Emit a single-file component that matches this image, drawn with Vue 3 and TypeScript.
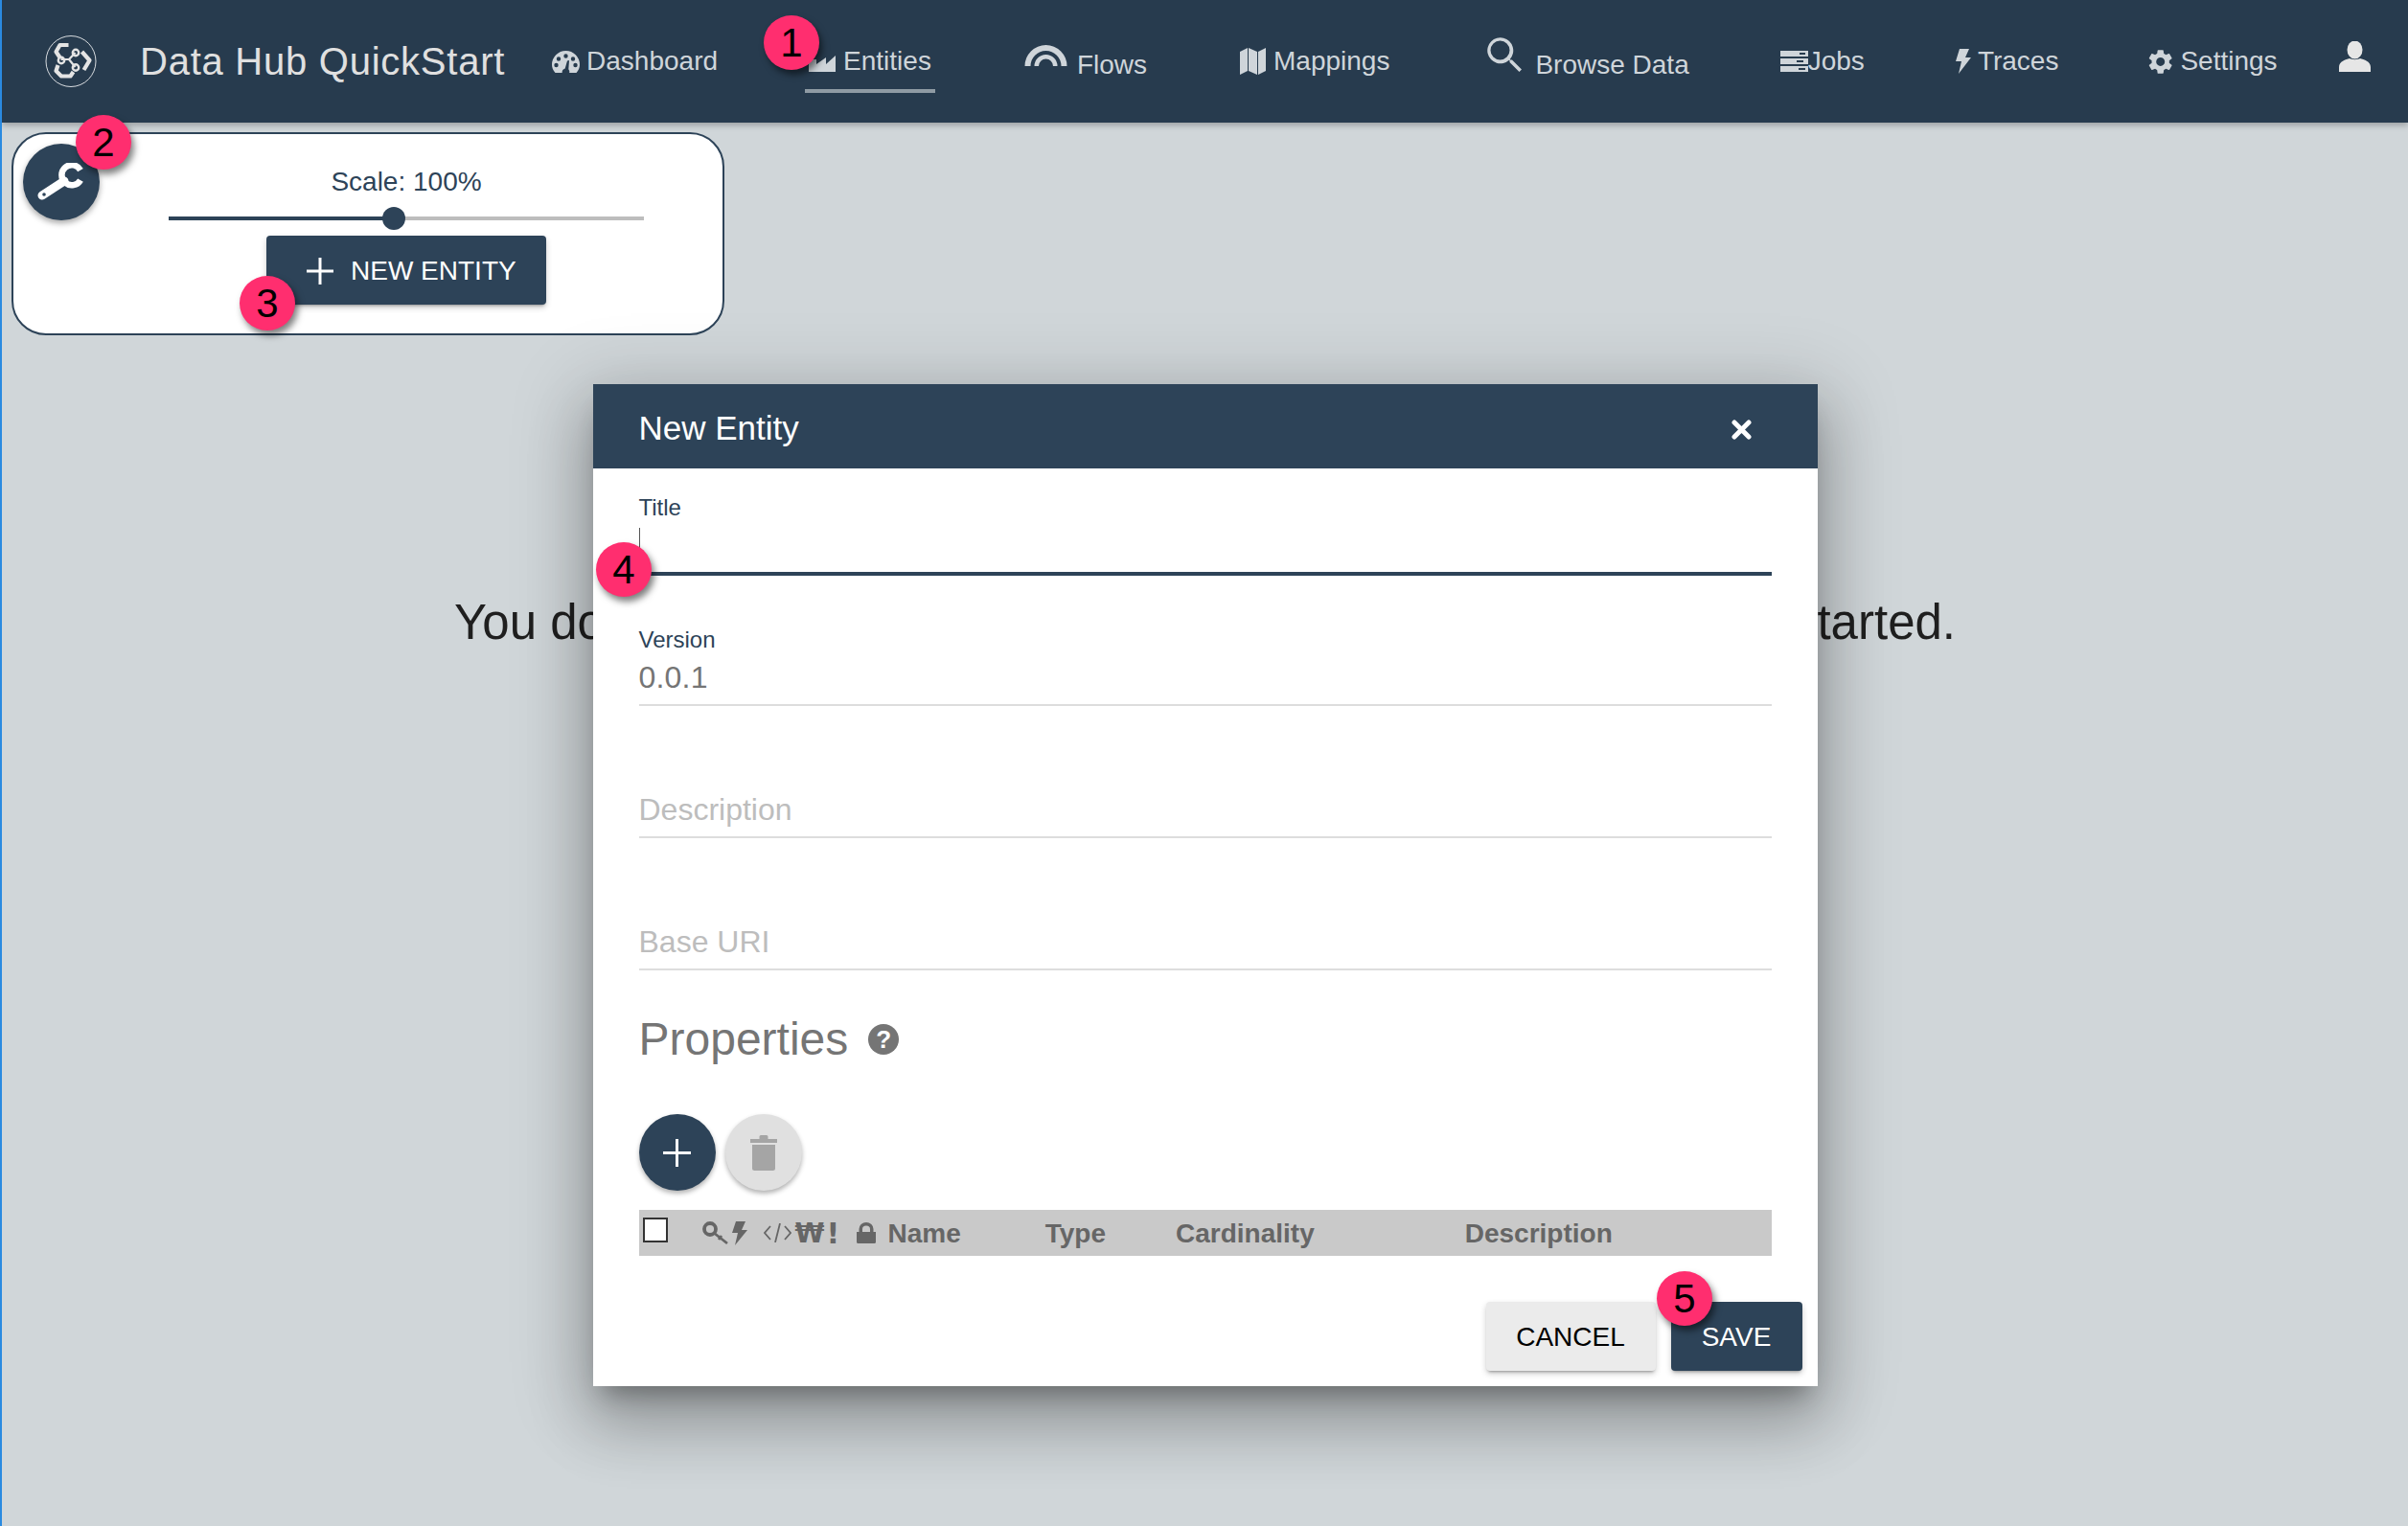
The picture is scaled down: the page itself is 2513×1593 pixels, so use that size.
<script setup lang="ts">
interface NavIcon {
  w: number;
  h: number;
  d: string;
}

interface NavItem {
  key: string;
  label: string;
  icon: NavIcon;
}

const hole = (x: number, y: number, r: number) =>
  `M${x - r} ${y}a${r} ${r} 0 1 0 ${r * 2} 0a${r} ${r} 0 1 0 ${-r * 2} 0z`;

const NAV_ITEMS: NavItem[] = [
  {
    key: 'dashboard',
    label: 'Dashboard',
    icon: {
      w: 29,
      h: 23,
      d:
        'M3.5 23C1.2 20.6 0 17.6 0 14.5a14.5 14.5 0 0 1 29 0c0 3.100-1.200 6.100-3.500 8.500h-7.300a4 4 0 0 0-.9-3.800L18 10l-2 .4-2.300 8.200a4.500 4.500 0 0 0-3.100 4.400z' +
        hole(14.5, 5.5, 2.2) + hole(7, 8.500, 2.2) + hole(22, 8.500, 2.2) + hole(4.500, 15, 2.2) + hole(24.500, 15, 2.2),
    },
  },
  {
    key: 'entities',
    label: 'Entities',
    icon: { w: 28, h: 21, d: 'M0 21V8h8v5l10-7v7l10-9v17z' },
  },
  {
    key: 'flows',
    label: 'Flows',
    icon: {
      w: 45,
      h: 22,
      d: 'M0.5 22A22 22 0 0 1 44.500 22H38.500A16 16 0 0 0 6.500 22zM10.500 22A12 12 0 0 1 34.500 22H30A7.500 7.500 0 0 0 15 22z',
    },
  },
  {
    key: 'mappings',
    label: 'Mappings',
    icon: { w: 27, h: 28, d: 'M0 4l8-4v24l-8 4zM9 0l9 4v24l-9-4zM19 4l8-4v24l-8 4z' },
  },
  {
    key: 'browse',
    label: 'Browse Data',
    icon: {
      w: 36,
      h: 36,
      d: 'M26 23.500h-1.700l-.6-.6A13.500 13.500 0 1 0 22.900 23.700l.6.6V26l10 10 2.500-2.500zM13.500 23.500a10 10 0 1 1 0-20 10 10 0 0 1 0 20z',
    },
  },
  {
    key: 'jobs',
    label: 'Jobs',
    icon: {
      w: 29,
      h: 22,
      d: 'M0 0h29v6H0zM20 2v2h6V2zM0 8h29v6H0zM17 10v2h7v-2zM0 16h29v6H0zM19 18v2h7v-2z',
    },
  },
  {
    key: 'traces',
    label: 'Traces',
    icon: { w: 16, h: 26, d: 'M4 0h10l-4 9h6L3 26l3-13H0z' },
  },
  {
    key: 'settings',
    label: 'Settings',
    icon: {
      w: 25,
      h: 25,
      d: 'M21.800 13.700c.05-.4.08-.8.08-1.200s-.03-.8-.09-1.200l2.600-2c.23-.18.3-.5.150-.78l-2.450-4.240c-.15-.28-.47-.37-.75-.28l-3.050 1.220c-.64-.48-1.310-.89-2.070-1.200l-.46-3.240C15.710.5 15.450.28 15.150.28h-4.900c-.31 0-.55.22-.6.52l-.46 3.240c-.75.31-1.440.73-2.070 1.200L4.070 4.020c-.28-.1-.6 0-.75.28L.870 8.540c-.15.27-.1.6.150.78l2.590 2c-.06.4-.11.8-.11 1.200s.03.8.09 1.200l-2.590 2c-.23.18-.3.52-.15.78l2.450 4.240c.15.28.47.37.75.28l3.050-1.220c.64.48 1.310.89 2.070 1.200l.46 3.240c.06.31.31.52.61.52h4.900c.31 0 .56-.22.6-.52l.46-3.240c.75-.31 1.440-.71 2.070-1.200l3.050 1.220c.28.1.6 0 .75-.28l2.450-4.240c.15-.28.09-.6-.15-.78zM12.700 16.900a4.500 4.500 0 1 1 0-9 4.500 4.500 0 0 1 0 9z',
    },
  },
];
</script>

<template>
  <div class="page">
    <header class="nav">
      <svg class="logo" viewBox="7 8 53 54" aria-label="Logo">
        <ellipse cx="33.500" cy="35" rx="26" ry="26.500" fill="none" stroke="#d8dce0" stroke-width="1" />
        <g fill="none" stroke="#e4e4e4" stroke-width="4.200" stroke-linejoin="round">
          <path d="M31 18H22L18 25L22 31" />
          <path d="M45 25L53 34L47 44" />
          <path d="M20 39L18 45L23.500 50.500H33L36 46" />
          <path stroke-width="2.200" d="M38 26L31.500 33L38 41M31.500 33H23" />
          <circle cx="38.500" cy="26" r="3.200" stroke-width="2.400" />
          <circle cx="23.500" cy="34" r="3.200" stroke-width="2.400" />
          <circle cx="38.500" cy="41.500" r="3.200" stroke-width="2.400" />
        </g>
      </svg>
      <div class="brand">Data Hub QuickStart</div>
      <a
        v-for="item in NAV_ITEMS"
        :key="item.key"
        class="nav-item"
        :class="`nav-item--${item.key}`"
      >
        <svg
          class="nav-icon"
          :width="item.icon.w"
          :height="item.icon.h"
          :viewBox="`0 0 ${item.icon.w} ${item.icon.h}`"
        >
          <path :d="item.icon.d" fill="currentColor" fill-rule="evenodd" />
        </svg>
        <span>{{ item.label }}</span>
      </a>
      <svg class="user" width="33" height="32" viewBox="0 0 33 32">
        <ellipse cx="16.500" cy="9" rx="8" ry="9.500" fill="#e6e6e6" />
        <path d="M0 32v-5c0-6 7-8 11-9 3 1.500 8 1.500 11 0 4 1 11 3 11 9v5z" fill="#e6e6e6" />
      </svg>
    </header>

    <main class="main">
      <section class="tools">
        <button class="tools-fab" aria-label="Tools">
          <svg width="50" height="40" viewBox="0 0 50 40">
            <path d="M5 34L28 19" fill="none" stroke="#fff" stroke-width="9" stroke-linecap="round" />
            <path d="M45 7.500A10.500 10.500 0 1 0 45 18" fill="none" stroke="#fff" stroke-width="6.500" />
            <circle cx="7" cy="33" r="1.800" fill="#2d4358" />
          </svg>
        </button>
        <div class="tools-body">
          <div class="scale-label">Scale: 100%</div>
          <div class="slider">
            <div class="slider-fill"></div>
            <div class="slider-thumb"></div>
          </div>
          <button class="new-entity">
            <svg width="28" height="28" viewBox="0 0 28 28">
              <path d="M14 0v28M0 14h28" stroke="#fff" stroke-width="3" />
            </svg>
            <span>NEW ENTITY</span>
          </button>
        </div>
      </section>
      <p class="empty-msg">You don't have any entities yet. Click New Entity button to get started.</p>
    </main>

    <div class="overlay">
      <div class="dialog">
        <div class="dialog-head">
          <span>New Entity</span>
          <svg class="dialog-close" width="21" height="21" viewBox="0 0 21 21">
            <path d="M3 3l15 15M18 3L3 18" stroke="#fff" stroke-width="5" stroke-linecap="round" />
          </svg>
        </div>
        <div class="dialog-body">
          <div class="field field--active">
            <label>Title</label>
            <div class="field-value"><i class="caret"></i></div>
          </div>
          <div class="field">
            <label>Version</label>
            <div class="field-value">0.0.1</div>
          </div>
          <div class="field">
            <label></label>
            <div class="field-value field-value--empty">Description</div>
          </div>
          <div class="field">
            <label></label>
            <div class="field-value field-value--empty">Base URI</div>
          </div>

          <h2 class="props-title">
            Properties
            <span class="help">?</span>
          </h2>

          <div class="props-actions">
            <button class="round round--add" aria-label="Add">
              <svg width="29" height="29" viewBox="0 0 29 29">
                <path d="M14.500 0v29M0 14.500h29" stroke="#fff" stroke-width="3" />
              </svg>
            </button>
            <button class="round round--del" aria-label="Delete">
              <svg width="28" height="37" viewBox="0 0 28 37">
                <path d="M0 4h9.500V1.500Q9.500 0 11 0h6q1.500 0 1.500 1.500V4H28v4H0zM2 10h24v24.500q0 2.500-2.500 2.500h-19Q2 37 2 34.500z" fill="#a5a5a5" />
              </svg>
            </button>
          </div>

          <div class="props-head">
            <span class="check"></span>
            <svg class="ic-key" width="29" height="25" viewBox="0 0 29 25">
              <circle cx="9" cy="8" r="6" fill="none" stroke="#666" stroke-width="3.800" />
              <path d="M13 12l14 11M21 15l-3 4" fill="none" stroke="#666" stroke-width="2.800" />
            </svg>
            <svg class="ic-bolt" width="16" height="25" viewBox="0 0 16 25">
              <path d="M4 0h10l-4 9h6L3 25l3-13H0z" fill="#666" />
            </svg>
            <svg class="ic-code" width="29" height="20" viewBox="0 0 29 20">
              <path d="M7 3L1 10l6 7M22 3l6 7-6 7M17 0l-5 20" fill="none" stroke="#666" stroke-width="1.800" />
            </svg>
            <span class="ic-won">₩</span>
            <span class="ic-bang">!</span>
            <svg class="ic-lock" width="20" height="22" viewBox="0 0 20 22">
              <path d="M0 10h2.500V7a7.500 7 0 0 1 15 0v3H20v10.500q0 1.500-1.500 1.500h-17Q0 22 0 20.500zM6 10h8V7a4 3.500 0 0 0-8 0z" fill="#666" fill-rule="evenodd" />
            </svg>
            <span class="col col--name">Name</span>
            <span class="col col--type">Type</span>
            <span class="col col--card">Cardinality</span>
            <span class="col col--desc">Description</span>
          </div>
        </div>
        <div class="dialog-foot">
          <button class="btn btn--cancel">CANCEL</button>
          <button class="btn btn--save">SAVE</button>
        </div>
      </div>
    </div>

    <span class="callout callout--1">1</span>
    <span class="callout callout--2">2</span>
    <span class="callout callout--3">3</span>
    <span class="callout callout--4">4</span>
    <span class="callout callout--5">5</span>
  </div>
</template>

<style scoped>
.page {
  position: relative;
  min-height: 1593px;
  overflow: hidden;
  border-left: 2px solid #2a8ae0;
  background: #d0d6d9;
  font-family: "Liberation Sans", Arial, sans-serif;
  color: #1a1a1a;
}

button {
  border: 0;
  padding: 0;
  font-family: inherit;
}

/* top bar */
.nav {
  display: flex;
  align-items: center;
  height: 128px;
  padding-left: 45px;
  background: #273b4e;
  color: #cfd5da;
  box-shadow: 0 3px 6px rgba(0, 0, 0, 0.25);
}

.logo {
  flex: none;
  width: 54px;
  height: 54px;
}

.brand {
  margin-left: 45px;
  font-size: 40px;
  letter-spacing: 0.75px;
  color: #e0e0e0;
  white-space: nowrap;
}

.nav-item {
  position: relative;
  display: flex;
  align-items: center;
  flex: none;
  font-size: 28px;
  height: 40px;
  white-space: nowrap;
}

.nav-icon {
  flex: none;
}

.nav-item--dashboard {
  margin-left: 49px;
  gap: 7px;
}

.nav-item--entities {
  margin-left: 95px;
  gap: 8px;
}

.nav-item--entities::after {
  content: "";
  position: absolute;
  left: -4px;
  right: -4px;
  top: 49px;
  height: 4px;
  background: #8f9ba4;
}

.nav-item--flows {
  margin-left: 97px;
  gap: 10px;
  align-items: flex-end;
}

.nav-item--flows .nav-icon {
  margin-bottom: 15px;
}

.nav-item--mappings {
  margin-left: 97px;
  gap: 8px;
}

.nav-item--browse {
  margin-left: 102px;
  gap: 14px;
  align-items: flex-end;
}

.nav-item--browse .nav-icon {
  margin-bottom: 9px;
}

.nav-item--jobs {
  margin-left: 95px;
  gap: 0;
}

.nav-item--traces {
  margin-left: 95px;
  gap: 7px;
}

.nav-item--settings {
  margin-left: 94px;
  gap: 8px;
}

.user {
  flex: none;
  margin-left: 64px;
  margin-top: -10px;
}

/* tools panel */
.main {
  padding: 10px 0 0 10px;
}

.tools {
  display: flex;
  box-sizing: border-box;
  width: 744px;
  height: 212px;
  padding: 10px;
  background: #fff;
  border: 2px solid #2d4358;
  border-radius: 36px;
}

.tools-fab {
  display: flex;
  align-items: center;
  justify-content: center;
  flex: none;
  width: 80px;
  height: 80px;
  border-radius: 50%;
  background: #2d4358;
  box-shadow: 0 3px 6px rgba(0, 0, 0, 0.35);
}

.tools-body {
  display: flex;
  flex-direction: column;
  align-items: center;
  width: 496px;
  margin-left: 72px;
  padding-top: 22px;
}

.scale-label {
  font-size: 28px;
  line-height: 36px;
  color: #2d4358;
}

.slider {
  position: relative;
  width: 100%;
  height: 4px;
  margin: 18px 0 16px;
  background: #bdbdbd;
}

.slider-fill {
  width: 235px;
  height: 100%;
  background: #2d4358;
}

.slider-thumb {
  position: absolute;
  left: 223px;
  top: -10px;
  width: 24px;
  height: 24px;
  border-radius: 50%;
  background: #2d4358;
}

.new-entity {
  display: flex;
  align-items: center;
  gap: 18px;
  flex: none;
  box-sizing: border-box;
  width: 292px;
  height: 72px;
  padding: 1px 0 0 42px;
  border-radius: 4px;
  background: #2d4358;
  color: #fff;
  font-size: 28px;
  box-shadow: 0 3px 3px -2px rgba(0, 0, 0, 0.3), 0 3px 6px rgba(0, 0, 0, 0.2);
}

.empty-msg {
  margin: 270px 0 0 -10px;
  font-size: 51px;
  line-height: 60px;
  text-align: center;
  color: #1f1f1f;
}

/* dialog */
.overlay {
  position: absolute;
  inset: 0;
  display: flex;
  justify-content: center;
  align-items: flex-start;
  padding-top: 401px;
}

.dialog {
  width: 1278px;
  height: 1046px;
  display: flex;
  flex-direction: column;
  background: #fff;
  box-shadow: 0 18px 24px -11px rgba(0, 0, 0, 0.3), 0 38px 61px 5px rgba(0, 0, 0, 0.2), 0 14px 74px 13px rgba(0, 0, 0, 0.16);
}

.dialog-head {
  display: flex;
  align-items: center;
  justify-content: space-between;
  flex: none;
  box-sizing: border-box;
  height: 88px;
  padding: 3px 69px 0 48px;
  background: #2d4358;
  color: #fff;
  font-size: 35px;
}

.dialog-close {
  margin-top: 3px;
}

.dialog-body {
  flex: 1;
  padding: 26px 48px 0;
}

.field {
  margin-bottom: 54px;
  border-bottom: 2px solid #ddd;
}

.field label {
  display: block;
  height: 30px;
  font-size: 24px;
  line-height: 30px;
  color: #2d4358;
}

.field-value {
  position: relative;
  height: 52px;
  font-size: 32px;
  line-height: 48px;
  letter-spacing: 0.2px;
  color: #757575;
}

.field-value--empty {
  color: #bdbdbd;
  letter-spacing: 0;
}

.field--active {
  margin-bottom: 52px;
  border-bottom: 4px solid #2d4358;
}

.caret {
  position: absolute;
  left: 0;
  top: 6px;
  width: 1px;
  height: 40px;
  background: #555;
}

.props-title {
  display: flex;
  align-items: center;
  gap: 21px;
  margin: -12px 0 0;
  height: 60px;
  font-size: 48px;
  font-weight: 400;
  line-height: 60px;
  color: #757575;
}

.help {
  display: flex;
  align-items: center;
  justify-content: center;
  width: 32px;
  height: 32px;
  border-radius: 50%;
  background: #757575;
  color: #fff;
  font-size: 26px;
  font-weight: 700;
  line-height: 1;
}

.props-actions {
  display: flex;
  gap: 10px;
  margin-top: 48px;
}

.round {
  display: flex;
  align-items: center;
  justify-content: center;
  width: 80px;
  height: 80px;
  border-radius: 50%;
  box-shadow: 0 3px 5px rgba(0, 0, 0, 0.3);
}

.round--add {
  background: #2d4358;
}

.round--del {
  background: #e0e0e0;
}

.props-head {
  display: flex;
  align-items: center;
  height: 48px;
  margin-top: 20px;
  background: #c9c9c9;
  color: #666;
  font-size: 28px;
  font-weight: 700;
}

.check {
  flex: none;
  box-sizing: border-box;
  width: 26px;
  height: 26px;
  margin: -6px 0 0 4px;
  background: #fff;
  border: 2px solid #333;
}

.ic-key {
  margin-left: 35px;
}

.ic-bolt {
  margin-left: 3px;
}

.ic-code {
  margin-left: 17px;
}

.ic-won {
  width: 28px;
  margin-left: 4px;
  font-family: "DejaVu Sans", sans-serif;
  font-size: 28px;
}

.ic-bang {
  width: 10px;
  margin-left: 5px;
  font-family: "DejaVu Sans", sans-serif;
  font-size: 30px;
}

.ic-lock {
  margin-left: 21px;
}

.col {
  padding-top: 1px;
}

.col--name {
  margin-left: 13px;
}

.col--type {
  margin-left: 88px;
}

.col--card {
  margin-left: 73px;
}

.col--desc {
  margin-left: 157px;
}

.dialog-foot {
  display: flex;
  justify-content: flex-end;
  gap: 16px;
  padding: 0 16px 16px;
}

.btn {
  height: 72px;
  padding-top: 2px;
  border-radius: 4px;
  font-size: 28px;
  box-shadow: 0 3px 3px -2px rgba(0, 0, 0, 0.3), 0 3px 6px rgba(0, 0, 0, 0.2);
}

.btn--cancel {
  width: 177px;
  background: #ebebeb;
  color: #000;
}

.btn--save {
  width: 137px;
  background: #2d4358;
  color: #fff;
}

/* numbered annotations on top of the screenshot */
.callout {
  position: absolute;
  display: flex;
  align-items: center;
  justify-content: center;
  width: 58px;
  height: 57px;
  border-radius: 50%;
  background: #ff2e6f;
  color: #000;
  font-size: 42px;
  box-shadow: 3px 5px 7px rgba(0, 0, 0, 0.5);
}

.callout--1 { left: 795px; top: 16px; }
.callout--2 { left: 77px; top: 120px; }
.callout--3 { left: 248px; top: 288px; }
.callout--4 { left: 620px; top: 566px; }
.callout--5 { left: 1727px; top: 1327px; }
</style>

<style>
html,
body {
  margin: 0;
  background: #d0d6d9;
}
</style>
